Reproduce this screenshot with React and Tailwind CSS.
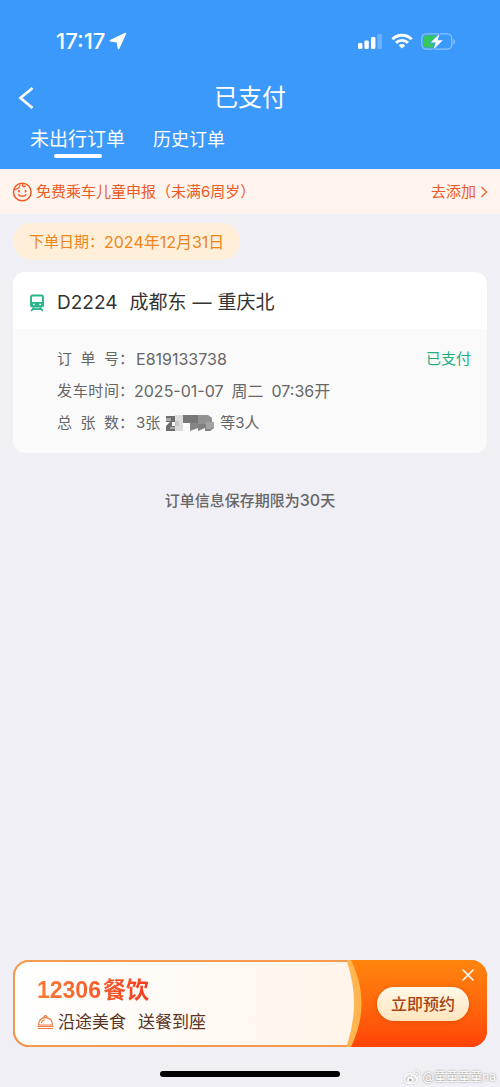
const orders = [
  {
    train: 'D2224',
    from: '成都东',
    to: '重庆北',
    number: 'E819133738',
    date: '2025-01-07',
    weekday: '周二',
    time: '07:36开',
    status: '已支付',
  },
];

function StatusBar() {
  return (
    <div className="flex h-20 items-center justify-between pt-0.5 pr-11 pl-14">
      <div className="flex items-center gap-1">
        <span className="text-[22px] leading-6 font-medium">17:17</span>
        <svg className="size-4.5" viewBox="0 0 18 18" fill="currentColor" stroke="currentColor" strokeWidth="1.6" strokeLinejoin="round" aria-hidden="true">
          <path d="M16.5 1.5 1.4 8.7l6.8 1.1L9.6 16.5Z" />
        </svg>
      </div>
      <div className="flex items-center gap-2">
        <svg className="h-4 w-[26px]" viewBox="0 0 26 16" fill="currentColor" aria-hidden="true">
          <rect x="1" y="10" width="4.4" height="6" rx="1.3" />
          <rect x="7.4" y="7.5" width="4.4" height="8.5" rx="1.3" />
          <rect x="14" y="4" width="4.4" height="12" rx="1.3" />
          <rect x="20.4" y="1" width="4.4" height="15" rx="1.3" opacity="0.25" />
        </svg>
        <svg className="h-4 w-[22px]" viewBox="0 0 22 16" aria-hidden="true">
          <g fill="none" stroke="currentColor" strokeWidth="2.9">
            <path d="M1.4 6.2a13.6 13.6 0 0 1 19.2 0" />
            <path d="M5 9.9a8.5 8.5 0 0 1 12 0" />
          </g>
          <path d="m11 15.6-3.2-3.2a4.5 4.5 0 0 1 6.4 0Z" fill="currentColor" />
        </svg>
        <svg className="h-[17px] w-[35px]" viewBox="0 0 35 17" aria-hidden="true">
          <rect x=".8" y=".8" width="30" height="15.4" rx="4.6" fill="none" stroke="#fff" strokeOpacity=".42" strokeWidth="1.3" />
          <path d="M32.5 6v5.4c1.8-.6 1.8-4.8 0-5.4Z" fill="#fff" fillOpacity=".5" />
          <path d="M5.5 2.5H14v12H5.5a3 3 0 0 1-3-3v-6a3 3 0 0 1 3-3Z" fill="#34c759" />
          <path d="M18.5.8 9.7 9.6h5l-2.2 6.8 9.3-9.2h-5.1Z" fill="#fff" stroke="#3b99fc" strokeWidth="1.6" paintOrder="stroke" strokeLinejoin="round" />
        </svg>
      </div>
    </div>
  );
}

function Header() {
  return (
    <header className="bg-[#3b99fc] text-white">
      <StatusBar />
      <div className="grid h-9 grid-cols-[1fr_auto_1fr] items-center px-4">
        <button type="button" aria-label="返回" className="w-6">
          <svg className="size-6" viewBox="0 0 24 24" fill="none" stroke="currentColor" strokeWidth="2.7" aria-hidden="true">
            <path d="M16.5 2 4.5 12l12 10" />
          </svg>
        </button>
        <h1 className="text-2xl leading-9">已支付</h1>
      </div>
      <nav className="flex h-[53px] items-start gap-7 pt-2.5 pl-[30px]">
        <button type="button" className="flex flex-col items-center text-[19px] leading-7">
          未出行订单
          <span className="h-1 w-12 rounded-xs bg-white" />
        </button>
        <button type="button" className="text-lg leading-7">历史订单</button>
      </nav>
    </header>
  );
}

function Notice() {
  return (
    <section className="flex h-[45px] items-center justify-between bg-[#fff4ee] px-3 text-[15px] leading-6 text-[#ee5a24]">
      <div className="flex items-center gap-1">
        <svg className="size-5" viewBox="0 0 20 20" fill="none" stroke="currentColor" strokeWidth="1.5" strokeLinecap="round" aria-hidden="true">
          <circle cx="10.3" cy="10" r="8.8" />
          <path d="M2.3 7.6C5.2 7.2 7.3 5.800 8 3.400M10.600 1.400v1.900c0 1.500 1.800 1.800 2.600.7" strokeWidth="1.3" />
          <path d="M7 9v.5M13.600 9v.5" strokeWidth="1.9" />
          <path d="M6.700 12.800c1.800 2 5.400 2 7.200 0" />
        </svg>
        <span>免费乘车儿童申报（未满6周岁）</span>
      </div>
      <a href="#add-child" className="flex items-center gap-1">
        去添加
        <svg className="h-3 w-2" viewBox="0 0 8 12" fill="none" stroke="currentColor" strokeWidth="1.2" aria-hidden="true">
          <path d="m1.5 1 5 5-5 5" />
        </svg>
      </a>
    </section>
  );
}

function TrainIcon() {
  return (
    <svg className="h-[18px] w-4" viewBox="0 0 16 18" fill="none" stroke="#27b58b" aria-hidden="true">
      <rect x="2" y="1.5" width="12" height="11" rx="1.5" strokeWidth="1.9" />
      <path d="M1.5 8h13v4.500h-13Z" fill="#27b58b" stroke="none" />
      <path d="M5 13.500 2.200 17M11 13.500l2.800 3.500M4.500 15.200h7" strokeWidth="1.7" />
      <path d="M4 10.400h1.800M10.200 10.400H12" stroke="#fff" strokeWidth="1.5" />
    </svg>
  );
}

function Label({ chars }) {
  return (
    <dt className="flex text-[15px]">
      <span className="flex w-[62px] justify-between">
        {chars.map((char) => (
          <span key={char}>{char}</span>
        ))}
      </span>
      <span>：</span>
    </dt>
  );
}

function MaskedName() {
  return (
    <svg className="mx-1.5 h-4 w-12" viewBox="0 0 48 16" role="img" aria-label="姓名已隐藏">
      <path d="M0 1h9v6H6v4h3v5H0v-5l4-4H0Z" fill="#6d6d6d" />
      <path d="M0 3h5v3H0ZM4 12h5v2H4Z" fill="#aaa" />
      <path d="M9 0h8v16H9Z" fill="#dcdcdc" />
      <path d="M9 6h4v5H9Z" fill="#c8c8c8" />
      <path d="M17 0h15v8H17Z" fill="#777" />
      <path d="M24 8h8v5l-8 3Z" fill="#858585" />
      <path d="M32 0h10l4 3v5l-6 3H32Z" fill="#929292" />
      <path d="M32 9h14l2-2v6l-4 3h-5v-3l-7 3Z" fill="#818181" />
      <path d="M40 7h8v5l-4 2h-4Z" fill="#a3a3a3" />
    </svg>
  );
}

function OrderCard({ order }) {
  return (
    <article className="overflow-hidden rounded-xl bg-[#fafafa]">
      <div className="flex h-[57px] items-center gap-3 bg-white px-4 pt-1">
        <TrainIcon />
        <h2 className="flex gap-3 text-[19px] leading-7 text-[#333]">
          <span>{order.train}</span>
          <span className="flex gap-1.5">
            <span>{order.from}</span>
            <span>—</span>
            <span>{order.to}</span>
          </span>
        </h2>
      </div>
      <div className="flex items-start justify-between px-4 py-3.5 leading-8 text-[#666]">
        <dl className="pl-7">
          <div className="flex gap-0.5">
            <Label chars={['订', '单', '号']} />
            <dd>{order.number}</dd>
          </div>
          <div className="flex">
            <Label chars={['发', '车', '时', '间']} />
            <dd className="flex gap-2">
              <span>{order.date}</span>
              <span>{order.weekday}</span>
              <span>{order.time}</span>
            </dd>
          </div>
          <div className="flex gap-0.5">
            <Label chars={['总', '张', '数']} />
            <dd className="flex items-center text-[15px]">
              3张 <MaskedName /> 等3人
            </dd>
          </div>
        </dl>
        <span className="text-[15px] text-[#20b07c]">{order.status}</span>
      </div>
    </article>
  );
}

function DiningBanner() {
  return (
    <aside className="relative mx-[13px] flex h-[87px] overflow-hidden rounded-2xl bg-linear-to-b from-[#ff850d] to-[#ff4309]">
      <div className="flex-1 rounded-l-2xl border-2 border-r-0 border-[#f49a4e] bg-linear-to-r from-white to-[#fff5ea] pt-3.5 pl-[22px] shadow-[0_0_0_4px_#f49a4e]">
        <p className="flex w-fit gap-0.5 bg-linear-to-r from-[#fa7a35] to-[#f43a20] bg-clip-text font-['Liberation_Sans','Noto_Sans_CJK_SC',sans-serif] text-[23px] leading-7 font-bold text-transparent">
          <span>12306</span>
          <span>餐饮</span>
        </p>
        <p className="flex items-center gap-1 pt-1 text-[17px] leading-7 text-[#5b3524]">
          <svg className="h-4 w-[17px]" viewBox="0 0 17 16" fill="none" stroke="#ef793f" strokeWidth="1.2" strokeLinecap="round" aria-hidden="true">
            <path d="M1.5 11c.2-4.500 3-7.300 7-7.300s6.800 2.800 7 7.300ZM.8 12.500h15.400M1.500 14.500h14M7.200 3.500a1.400 1.400 0 1 1 2.600 0M4.300 8.800C4.900 7.200 6 6.300 7.400 6" />
          </svg>
          <span className="flex gap-3">
            <span>沿途美食</span>
            <span>送餐到座</span>
          </span>
        </p>
      </div>
      <div className="relative flex w-[140px] items-center justify-center bg-linear-to-b from-[#ff850d] to-[#ff4309] pl-3">
        <svg className="absolute inset-y-0 left-0 h-full w-4" viewBox="0 0 16 87" preserveAspectRatio="none" aria-hidden="true">
          <path d="M0 0h4Q25 43 4 87H0Z" fill="#ffb550" />
          <path d="M0 2Q14 43 0 85Z" fill="#fff5ea" />
        </svg>
        <button type="button" className="h-[34px] w-[92px] rounded-full bg-linear-to-b from-[#fff8e8] to-[#ffe5bd] text-base font-medium text-[#a84312] shadow-[0_1px_4px_#b7390066]">
          立即预约
        </button>
      </div>
      <button type="button" aria-label="关闭" className="absolute top-2 right-3 text-white">
        <svg className="size-3.5" viewBox="0 0 14 14" fill="none" stroke="currentColor" strokeWidth="1.5" aria-hidden="true">
          <path d="m1.500 1.500 11 11M12.500 1.500l-11 11" />
        </svg>
      </button>
    </aside>
  );
}

function Watermark() {
  return (
    <div className="absolute right-1 bottom-0 flex items-center gap-0.5 text-xs leading-5 text-white [text-shadow:0_0_2px_#777]">
      <svg className="h-4 w-[18px]" viewBox="0 0 18 16" fill="none" stroke="#fff" strokeWidth="1.4" aria-hidden="true">
        <path d="M7 4.500C4.500 4.500 1 7.500 1 10.500s3.200 4.500 6.800 4.500 6.700-2 6.700-4.500c0-1.500-1-2.200-2.300-2.500.7-1.800-.8-2.600-3.600-1.300.5-1.500 0-2.200-1.600-2.200Z" stroke="#bbb" strokeWidth="2" />
        <path d="M7 4.500C4.500 4.500 1 7.500 1 10.500s3.200 4.500 6.800 4.500 6.700-2 6.700-4.500c0-1.500-1-2.200-2.300-2.500.7-1.800-.8-2.600-3.600-1.300.5-1.500 0-2.200-1.600-2.200Z" fill="#ddd" />
        <circle cx="7.3" cy="11" r="2.3" fill="#aaa" />
        <path d="M12 1.500c3-.5 5.500 2 4.700 5M12.300 4.200c1.300-.2 2.200.8 1.900 2" stroke="#bbb" strokeWidth="2.2" />
        <path d="M12 1.500c3-.5 5.500 2 4.700 5M12.300 4.200c1.300-.2 2.200.8 1.900 2" />
      </svg>
      <span>@童童童童na</span>
    </div>
  );
}

export default function App() {
  return (
    <div className="relative flex min-h-screen flex-col bg-[#f0eff5] font-[Inter,'Noto_Sans_CJK_SC',sans-serif]">
      <Header />
      <Notice />
      <main className="flex-1 px-[13px] pt-[9px]">
        <p className="mb-3 flex h-[37px] w-fit items-center rounded-full bg-[#ffefd9] px-4 text-[15px] leading-6 text-[#ee8519]">
          <span>下单日期：</span>
          <span className="text-base leading-6">2024年12月31日</span>
        </p>
        {orders.map((order) => (
          <OrderCard key={order.number} order={order} />
        ))}
        <p className="pt-[35px] text-center text-[15px] leading-6 font-medium text-[#666]">
          订单信息保存期限为<span className="text-base leading-6">30</span>天
        </p>
      </main>
      <DiningBanner />
      <footer className="flex h-10 items-end justify-center pb-2.5">
        <div className="h-1.5 w-[180px] rounded-full bg-black" />
        <Watermark />
      </footer>
    </div>
  );
}
